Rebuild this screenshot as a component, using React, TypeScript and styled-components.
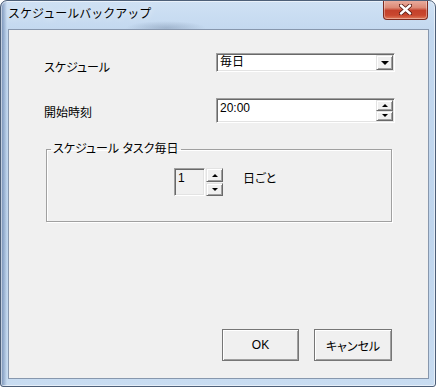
import styled, { createGlobalStyle } from "styled-components";

const GlobalStyle = createGlobalStyle`
  html, body {
    margin: 0;
    padding: 0;
    background: #ffffff;
  }
  body {
    font-family: "Liberation Sans", "Noto Sans CJK JP", sans-serif;
    font-size: 12px;
    color: #000;
    font-feature-settings: "palt";
  }
  #root {
    width: 436px;
    height: 387px;
  }
  * {
    box-sizing: border-box;
  }
`;

const Window = styled.div`
  width: 436px;
  height: 387px;
  display: flex;
  flex-direction: column;
  border: 1px solid #4d5f78;
  border-radius: 7px 7px 3px 3px;
  padding: 0 6px 7px 7px;
  overflow: hidden;
  background:
    radial-gradient(ellipse 40px 7px at 165px 27px, rgba(80, 100, 130, 0.3), rgba(80, 100, 130, 0)),
    linear-gradient(to right, rgba(60, 90, 140, 0.6) 0, rgba(60, 90, 140, 0) 6px),
    linear-gradient(to bottom, #cfe1f4 0, #c3d8ef 30px, #bfd5ed 60%, #c8dcf1 100%);
  box-shadow: inset 0 0 0 1px rgba(255, 255, 255, 0.55);
`;

const TitleBar = styled.div`
  height: 28px;
  display: flex;
  align-items: flex-start;
  justify-content: space-between;
`;

const Title = styled.div`
  padding-top: 6px;
  line-height: 14px;
  font-size: 12px;
  font-feature-settings: normal;
  text-shadow: 0 0 6px rgba(255, 255, 255, 0.9);
`;

const CloseButton = styled.div`
  width: 45px;
  height: 20px;
  margin-top: -1px;
  margin-right: 1px;
  display: flex;
  align-items: center;
  justify-content: center;
  border: 1px solid #7d2b20;
  border-top: none;
  border-radius: 0 0 4px 4px;
  background: linear-gradient(to bottom, #eab0a2 0, #dc8a76 40%, #c4412b 55%, #c9472f 80%, #e07a5a 100%);
  box-shadow: inset 0 0 0 1px rgba(255, 255, 255, 0.35);
`;

const Client = styled.div`
  flex: 1;
  display: flex;
  flex-direction: column;
  border: 1px solid #8797ad;
  background: #f0f0f0;
  padding: 23px 0 17px 0;
`;

const Row = styled.div<{ $gap: number }>`
  display: grid;
  grid-template-columns: 172px 179px;
  padding-left: 35px;
  margin-top: ${(p) => p.$gap}px;
`;

const Label = styled.div`
  padding-top: 8px;
  line-height: 14px;
`;

const Sunken = styled.div<{ $h: number; $w?: number; $bg?: string }>`
  height: ${(p) => p.$h}px;
  width: ${(p) => (p.$w ? `${p.$w}px` : "auto")};
  display: flex;
  border: 1px solid;
  border-color: #a0a0a0 #ffffff #ffffff #a0a0a0;
  padding: 1px;
  background: ${(p) => p.$bg || "#ffffff"};
  box-shadow: inset 1px 1px 0 #696969, inset -1px -1px 0 #e3e3e3;
`;

const FieldText = styled.div<{ $top?: number }>`
  flex: 1;
  padding: ${(p) => p.$top ?? 0}px 2px 0 2px;
  line-height: 14px;
`;

const RaisedButton = styled.div<{ $w?: number; $h?: number }>`
  width: ${(p) => (p.$w ? `${p.$w}px` : "auto")};
  height: ${(p) => (p.$h ? `${p.$h}px` : "auto")};
  flex: ${(p) => (p.$w || p.$h ? "none" : 1)};
  display: flex;
  align-items: center;
  justify-content: center;
  background: #f0f0f0;
  border: 1px solid;
  border-color: #e3e3e3 #696969 #696969 #e3e3e3;
  box-shadow: inset 1px 1px 0 #ffffff, inset -1px -1px 0 #a0a0a0;
`;

const SpinColumn = styled.div<{ $gap: number; $ml: number }>`
  width: 17px;
  display: flex;
  flex-direction: column;
  gap: ${(p) => p.$gap}px;
  margin-left: ${(p) => p.$ml}px;
`;

const Arrow = styled.span<{ $up?: boolean; $size?: number }>`
  width: 0;
  height: 0;
  border-left: ${(p) => p.$size ?? 3}px solid transparent;
  border-right: ${(p) => p.$size ?? 3}px solid transparent;
  ${(p) =>
    p.$up
      ? `border-bottom: ${p.$size ?? 3}px solid #000;`
      : `border-top: ${p.$size ?? 3}px solid #000;`}
`;

const Group = styled.fieldset`
  margin: 19px 0 0 37px;
  width: 346px;
  height: 80px;
  padding: 0;
  min-width: 0;
  border: 1px solid #a0a0a0;
  box-shadow: inset 1px 1px 0 #ffffff, 1px 1px 0 #ffffff;
`;

const Legend = styled.legend`
  margin-left: 4px;
  padding: 0 2px;
  line-height: 14px;
`;

const SpinRow = styled.div`
  display: flex;
  align-items: flex-start;
  padding-left: 127px;
  margin-top: 12px;
`;

const DayLabel = styled.div`
  margin-left: 20px;
  padding-top: 4px;
  line-height: 14px;
`;

const ButtonRow = styled.div`
  margin-top: auto;
  display: flex;
  justify-content: flex-end;
  gap: 15px;
  padding-right: 36px;
`;

const DialogButton = styled.button<{ $w: number }>`
  width: ${(p) => p.$w}px;
  height: 32px;
  padding: 0;
  font: inherit;
  color: #000;
  background: #f0f0f0;
  border: 1px solid #767676;
  box-shadow: inset 1px 1px 0 #ffffff, inset -1px -1px 0 #a0a0a0;
`;

const CloseGlyph = () => (
  <svg width="13" height="11" viewBox="0 0 13 11">
    <path d="M2 1.5 L11 9.5 M11 1.5 L2 9.5" stroke="#5a1c14" strokeWidth="4.2" strokeLinecap="round" />
    <path d="M2 1.5 L11 9.5 M11 1.5 L2 9.5" stroke="#ffffff" strokeWidth="2.4" strokeLinecap="round" />
  </svg>
);

export default function App() {
  return (
    <>
      <GlobalStyle />
      <Window>
        <TitleBar>
          <Title>スケジュールバックアップ</Title>
          <CloseButton>
            <CloseGlyph />
          </CloseButton>
        </TitleBar>
        <Client>
          <Row $gap={0}>
            <Label>スケジュール</Label>
            <Sunken $h={19}>
              <FieldText $top={0}>毎日</FieldText>
              <RaisedButton $w={17}>
                <Arrow $size={4} />
              </RaisedButton>
            </Sunken>
          </Row>
          <Row $gap={23}>
            <Label>開始時刻</Label>
            <Sunken $h={25}>
              <FieldText $top={1}>20:00</FieldText>
              <SpinColumn $gap={0} $ml={0}>
                <RaisedButton>
                  <Arrow $up />
                </RaisedButton>
                <RaisedButton>
                  <Arrow />
                </RaisedButton>
              </SpinColumn>
            </Sunken>
          </Row>
          <Group>
            <Legend>スケジュール タスク毎日</Legend>
            <SpinRow>
              <Sunken $h={28} $w={31} $bg="#f0f0f0">
                <FieldText $top={1}>1</FieldText>
              </Sunken>
              <SpinColumn $gap={1} $ml={1}>
                <RaisedButton $h={14}>
                  <Arrow $up />
                </RaisedButton>
                <RaisedButton $h={13}>
                  <Arrow />
                </RaisedButton>
              </SpinColumn>
              <DayLabel>日ごと</DayLabel>
            </SpinRow>
          </Group>
          <ButtonRow>
            <DialogButton $w={77}>OK</DialogButton>
            <DialogButton $w={78}>キャンセル</DialogButton>
          </ButtonRow>
        </Client>
      </Window>
    </>
  );
}
